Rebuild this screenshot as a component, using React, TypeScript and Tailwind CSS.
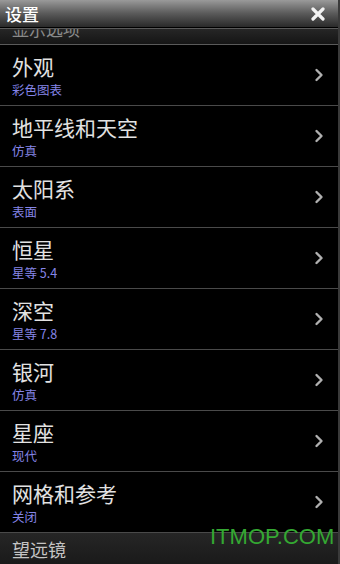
import React from "react";

const items = [
  { t: "外观", s: "彩色图表" },
  { t: "地平线和天空", s: "仿真" },
  { t: "太阳系", s: "表面" },
  { t: "恒星", s: "星等 5.4" },
  { t: "深空", s: "星等 7.8" },
  { t: "银河", s: "仿真" },
  { t: "星座", s: "现代" },
  { t: "网格和参考", s: "关闭" },
];

function Chevron() {
  return (
    <svg width="10" height="14" viewBox="0 0 10 14" className="mr-[14px]">
      <path d="M2.5 2 L7.5 7 L2.5 12" fill="none" stroke="#b0b0b0" strokeWidth="2.4" strokeLinecap="round" strokeLinejoin="round" />
    </svg>
  );
}

export default function App() {
  return (
    <div
      className="relative w-[340px] h-[564px] overflow-hidden bg-black flex flex-col border-r-2 border-[#3a3a3a]"
      style={{ fontFamily: '"Noto Sans CJK SC", "Noto Sans", sans-serif' }}
    >
      <div className="h-[27px] shrink-0 flex items-center justify-between px-[5px] bg-gradient-to-b from-[#9a9a9a] via-[#5a5a5a] to-[#2a2a2a]">
        <span className="text-white text-[17px] leading-none font-medium">设置</span>
        <svg width="14" height="14" viewBox="0 0 14 14" className="mr-[8px]">
          <path d="M2 2 L12 12 M12 2 L2 12" stroke="#f2f2f2" strokeWidth="3.2" strokeLinecap="round" />
        </svg>
      </div>
      <div className="h-px shrink-0 bg-black" />
      <div className="h-px shrink-0 bg-[#5a5a5a]" />
      <div className="h-[15px] shrink-0 overflow-hidden bg-gradient-to-b from-[#262626] to-[#151515] px-[12px]">
        <div className="text-[17px] leading-none text-[#8a8a8a] mt-[-9px]">显示选项</div>
      </div>
      <div className="h-px shrink-0 bg-[#5a5a5a]" />
      {items.map((it) => (
        <div key={it.t} className="shrink-0 flex flex-col">
          <div className="h-[60px] flex items-center justify-between pl-[12px]">
            <div className="flex flex-col pt-[2px]">
              <span className="text-[21px] leading-[24px] text-[#e2e2e2]">{it.t}</span>
              <span className="text-[12.5px] leading-[16px] mt-[4px] text-[#8585e8]">{it.s}</span>
            </div>
            <Chevron />
          </div>
          <div className="h-px bg-[#4a4a4a]" />
        </div>
      ))}
      <div className="flex-1 flex items-center px-[12px] bg-gradient-to-b from-[#262626] to-[#1a1a1a]">
        <span className="text-[18px] leading-none text-[#c4c4c4]">望远镜</span>
      </div>
      <div
        className="absolute left-[210px] top-[526px] text-[22px] leading-none text-[#34a832]"
        style={{ fontFamily: '"Liberation Sans", Arial, sans-serif' }}
      >
        ITMOP.COM
      </div>
    </div>
  );
}
